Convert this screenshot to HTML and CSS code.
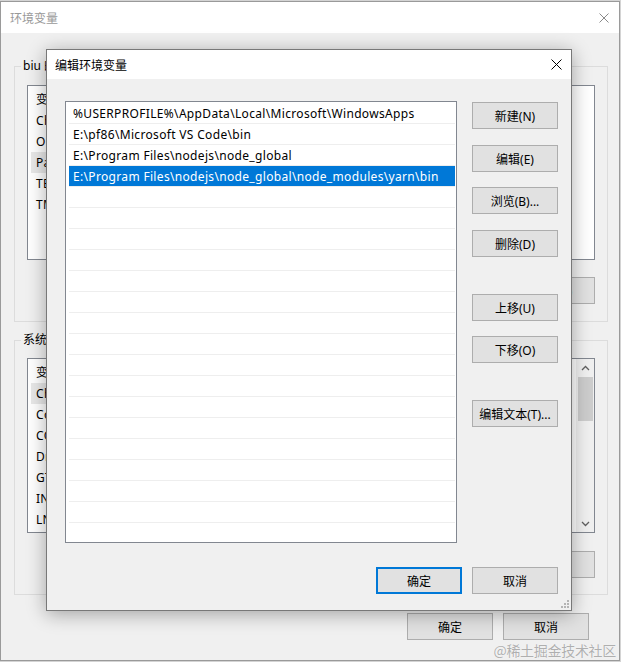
FILE: index.html
```html
<!DOCTYPE html>
<html lang="zh-CN">
<head>
<meta charset="utf-8">
<title>环境变量</title>
<link rel="stylesheet" href="styles.css">
</head>
<body>
<div class="win">
  <div class="win-title">
    <span>环境变量</span>
    <svg class="x-icon grey" width="10" height="10" viewBox="0 0 10 10"><path d="M0.5 0.5 L9.5 9.5 M9.5 0.5 L0.5 9.5" stroke="#8a8a8a" stroke-width="1" fill="none"/></svg>
  </div>
  <div class="win-body">
    <fieldset class="group user">
      <legend>biu 的用户变量(U)</legend>
      <div class="vlist">
        <div class="vlist-rows">
          <div class="vrow head"><span class="c1">变量</span><span>值</span></div>
          <div class="vrow"><span class="c1">ChocolateyLastPathUpdate</span><span>133012345678901234</span></div>
          <div class="vrow"><span class="c1">OneDrive</span><span>C:\Users\biu\OneDrive</span></div>
          <div class="vrow sel"><span class="c1">Path</span><span>%USERPROFILE%\AppData\Local\Microsoft\...</span></div>
          <div class="vrow"><span class="c1">TEMP</span><span>%USERPROFILE%\AppData\Local\Temp</span></div>
          <div class="vrow"><span class="c1">TMP</span><span>%USERPROFILE%\AppData\Local\Temp</span></div>
        </div>
      </div>
      <div class="btnrow">
        <button class="btn">新建(N)...</button>
        <button class="btn">编辑(E)...</button>
        <button class="btn">删除(D)</button>
      </div>
    </fieldset>
    <fieldset class="group sys">
      <legend>系统变量(S)</legend>
      <div class="vlist">
        <div class="vlist-rows">
          <div class="vrow head"><span class="c1">变量</span><span>值</span></div>
          <div class="vrow sel"><span class="c1">ChocolateyInstall</span><span>C:\ProgramData\chocolatey</span></div>
          <div class="vrow"><span class="c1">ComSpec</span><span>C:\Windows\system32\cmd.exe</span></div>
          <div class="vrow"><span class="c1">COMPLUS_ProfAPI</span><span>1</span></div>
          <div class="vrow"><span class="c1">DriverData</span><span>C:\Windows\System32\Drivers\DriverData</span></div>
          <div class="vrow"><span class="c1">GTK_BASEPATH</span><span>C:\GTK</span></div>
          <div class="vrow"><span class="c1">INCLUDE</span><span>C:\include</span></div>
          <div class="vrow"><span class="c1">LNKEnv</span><span>C:\Program Files</span></div>
        </div>
        <div class="sbar">
          <div class="sbar-arrow"><svg width="9" height="6" viewBox="0 0 9 6"><path d="M1 5 L4.5 1.5 L8 5" stroke="#606060" stroke-width="1.3" fill="none"/></svg></div>
          <div class="sbar-thumb"></div>
          <div class="sbar-track"></div>
          <div class="sbar-arrow"><svg width="9" height="6" viewBox="0 0 9 6"><path d="M1 1 L4.5 4.5 L8 1" stroke="#606060" stroke-width="1.3" fill="none"/></svg></div>
        </div>
      </div>
      <div class="btnrow sysbtns">
        <button class="btn">新建(W)...</button>
        <button class="btn">编辑(I)...</button>
        <button class="btn">删除(L)</button>
      </div>
    </fieldset>
    <div class="win-foot">
      <button class="btn">确定</button>
      <button class="btn">取消</button>
    </div>
  </div>
</div>

<div class="dlg">
  <div class="dlg-title">
    <span>编辑环境变量</span>
    <svg class="x-icon" width="11" height="11" viewBox="0 0 11 11"><path d="M0.5 0.5 L10.5 10.5 M10.5 0.5 L0.5 10.5" stroke="#000" stroke-width="1" fill="none"/></svg>
  </div>
  <div class="dlg-body">
    <div class="dlg-main">
      <div class="plist">
        <div class="prow">%USERPROFILE%\AppData\Local\Microsoft\WindowsApps</div>
        <div class="prow">E:\pf86\Microsoft VS Code\bin</div>
        <div class="prow">E:\Program Files\nodejs\node_global</div>
        <div class="prow sel">E:\Program Files\nodejs\node_global\node_modules\yarn\bin</div>
        <div class="prow"></div><div class="prow"></div><div class="prow"></div><div class="prow"></div>
        <div class="prow"></div><div class="prow"></div><div class="prow"></div><div class="prow"></div>
        <div class="prow"></div><div class="prow"></div><div class="prow"></div><div class="prow"></div>
        <div class="prow"></div><div class="prow"></div><div class="prow"></div><div class="prow"></div>
        <div class="prow"></div>
      </div>
      <div class="dlg-btns">
        <button class="btn">新建(N)</button>
        <button class="btn g16">编辑(E)</button>
        <button class="btn g15">浏览(B)...</button>
        <button class="btn g16">删除(D)</button>
        <button class="btn g37">上移(U)</button>
        <button class="btn g15">下移(O)</button>
        <button class="btn g37">编辑文本(T)...</button>
      </div>
    </div>
    <div class="dlg-foot">
      <button class="btn default">确定</button>
      <button class="btn">取消</button>
    </div>
  </div>
  <svg class="grip" width="10" height="10" viewBox="0 0 10 10">
    <rect x="7" y="1" width="2" height="2" fill="#b4b4b4"/>
    <rect x="4" y="4" width="2" height="2" fill="#b4b4b4"/>
    <rect x="7" y="4" width="2" height="2" fill="#b4b4b4"/>
    <rect x="1" y="7" width="2" height="2" fill="#b4b4b4"/>
    <rect x="4" y="7" width="2" height="2" fill="#b4b4b4"/>
    <rect x="7" y="7" width="2" height="2" fill="#b4b4b4"/>
  </svg>
</div>

<div class="watermark">@稀土掘金技术社区</div>
</body>
</html>
```

FILE: styles.css
```css
* {
  box-sizing: border-box;
}

body {
  margin: 0;
  width: 621px;
  height: 662px;
  overflow: hidden;
  position: relative;
  background: #d4d4d4;
  font-family: "Noto Sans", "Noto Sans CJK SC", sans-serif;
  font-size: 12px;
  color: #000;
}

/* ---------- background window ---------- */
.win {
  margin-top: 1px;
  width: 620px;
  height: 660px;
  border: 1px solid #9a9a9a;
  background: #f0f0f0;
  display: flex;
  flex-direction: column;
}

.win-title {
  height: 31px;
  flex: none;
  background: #fff;
  color: #999;
  display: flex;
  align-items: center;
  justify-content: space-between;
  padding: 0 10px 0 9px;
}

.win-body {
  padding: 0 11px 0 13px;
  display: flex;
  flex-direction: column;
}

.group {
  margin: 0;
  min-width: 0;
  border: 1px solid #dcdcdc;
}

.group legend {
  padding: 0 2px;
  margin-left: -6px;
  line-height: 16px;
}

.group.user {
  margin-top: 25px;
  padding: 11px 12px 17px 12px;
}

.group.sys {
  margin-top: 10px;
  padding: 10px 12px 16px 12px;
}

.vlist {
  height: 175px;
  border: 1px solid #828790;
  background: #fff;
  display: flex;
  overflow: hidden;
}

.vlist-rows {
  flex: 1;
  padding: 3px 0 0 3px;
  min-width: 0;
}

.vrow {
  height: 21px;
  line-height: 21px;
  white-space: nowrap;
  display: flex;
  letter-spacing: 0.3px;
}

.vrow .c1 {
  width: 200px;
  flex: none;
  padding-left: 5px;
}

.vrow.sel .c1 {
  background: #e8e8e8;
}

.sbar {
  width: 18px;
  flex: none;
  background: #f0f0f0;
  display: flex;
  flex-direction: column;
  padding-left: 1px;
}

.sbar-arrow {
  height: 17px;
  display: flex;
  align-items: center;
  justify-content: center;
}

.sbar-thumb {
  height: 44px;
  margin: 1px 1px 0 1px;
  background: #cdcdcd;
}

.sbar-track {
  flex: 1;
}

.btnrow {
  display: flex;
  justify-content: flex-end;
  gap: 10px;
  margin-top: 17px;
}

.btnrow.sysbtns {
  margin-top: 18px;
}

.btn {
  width: 86px;
  height: 27px;
  padding: 0;
  background: #e1e1e1;
  border: 1px solid #adadad;
  font-family: "Noto Sans", "Noto Sans CJK SC", sans-serif;
  font-size: 12px;
  color: #000;
  white-space: nowrap;
}

.win-foot {
  margin-top: 18px;
  margin-right: 19px;
  display: flex;
  justify-content: flex-end;
  gap: 10px;
}

/* ---------- dialog ---------- */
.dlg {
  position: absolute;
  left: 46px;
  top: 49px;
  width: 526px;
  height: 562px;
  border: 1px solid #787878;
  background: #f0f0f0;
  box-shadow: 0 3px 18px rgba(0, 0, 0, 0.33);
  display: flex;
  flex-direction: column;
}

.dlg-title {
  height: 29px;
  flex: none;
  background: #fff;
  display: flex;
  align-items: center;
  justify-content: space-between;
  padding: 0 9px 0 8px;
}

.dlg-body {
  flex: 1;
  padding: 22px 13px 0 18px;
  display: flex;
  flex-direction: column;
}

.dlg-main {
  display: flex;
  gap: 15px;
}

.plist {
  width: 392px;
  height: 442px;
  flex: none;
  border: 1px solid #828790;
  background: #fff;
  padding: 1px 1px 0 3px;
  overflow: hidden;
}

.prow {
  height: 21px;
  padding-top: 2px;
  line-height: 18px;
  border-bottom: 1px solid #eeeeee;
  padding-left: 4px;
  white-space: nowrap;
  letter-spacing: 0.33px;
}

.prow.sel {
  background: #0078d7;
  color: #fff;
}

.dlg-btns {
  display: flex;
  flex-direction: column;
  padding-top: 1px;
}

.g15 { margin-top: 15px; }
.g16 { margin-top: 16px; }
.g37 { margin-top: 37px; }

.dlg-foot {
  margin-top: 24px;
  display: flex;
  justify-content: flex-end;
  gap: 10px;
}

.btn.default {
  border: 2px solid #0078d7;
}

.grip {
  position: absolute;
  right: 1px;
  bottom: 1px;
}

.watermark {
  position: absolute;
  right: 5px;
  bottom: 2px;
  font-family: "Noto Sans CJK SC", sans-serif;
  font-size: 14px;
  color: rgba(150, 150, 150, 0.75);
  text-shadow: 0 0 1px rgba(255, 255, 255, 0.9);
  letter-spacing: -0.3px;
}
```
